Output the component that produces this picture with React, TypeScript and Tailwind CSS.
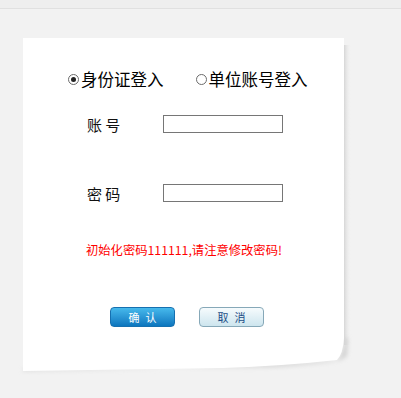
import React from "react";

const cjk = "font-['Microsoft_YaHei','Noto_Sans_CJK_SC',sans-serif]";

function Radio({ checked }: { checked?: boolean }) {
  return (
    <span className="flex h-[11px] w-[11px] shrink-0 items-center justify-center rounded-full border border-[#6b6b6b] bg-white">
      {checked && <span className="h-[5px] w-[5px] rounded-full bg-[#222]" />}
    </span>
  );
}

function PaperSheet() {
  // paper sheet with a curled bottom-right corner, drawn behind the form
  return (
    <svg className="pointer-events-none absolute left-0 top-0 overflow-visible" width="321" height="334" viewBox="0 0 321 334">
      <defs>
        <linearGradient id="side" x1="0" x2="1" y1="0" y2="0">
          <stop offset="0" stopColor="#d6d6d6" />
          <stop offset="1" stopColor="#f2f2f2" stopOpacity="0" />
        </linearGradient>
        <filter id="blur" x="-10%" y="-10%" width="120%" height="120%">
          <feGaussianBlur stdDeviation="2" />
        </filter>
      </defs>
      <rect x="321" y="7" width="7" height="300" fill="url(#side)" />
      <path d="M0,331 L250,329 Q300,326 318,322 L324,318 L325,300 L321,300 L321,304 Q320,318 314,322 Q200,330 0,333 Z" fill="#d2d2d2" filter="url(#blur)" />
      <path d="M0,0 H321 V300 Q320,316 314,322 Q260,328 200,330 L0,333 Z" fill="#ffffff" />
    </svg>
  );
}

export default function App() {
  return (
    <div className={`h-[398px] w-[401px] overflow-hidden bg-[#f2f2f2] ${cjk}`}>
      <div className="h-[9px] border-b border-[#e0e0e0] bg-[#eeeeee]" />
      <div className="relative ml-[23px] mt-[29px] h-[334px] w-[321px]">
        <PaperSheet />
        <div className="relative flex flex-col">
          <div className="ml-[45px] mt-[31px] flex h-[20px] items-center text-[16.5px] text-black">
            <label className="flex items-center gap-[2px]">
              <Radio checked />
              <span>身份证登入</span>
            </label>
            <label className="ml-[32px] flex items-center gap-[2px]">
              <Radio />
              <span>单位账号登入</span>
            </label>
          </div>

          <div className="ml-[64px] mt-[26px] flex h-[18px] items-center">
            <span className="w-[76px] text-[15px] leading-none text-[#111]">账 号</span>
            <input className="h-[18px] w-[120px] border border-[#767676] bg-white outline-none" />
          </div>
          <div className="ml-[64px] mt-[51px] flex h-[18px] items-center">
            <span className="w-[76px] text-[15px] leading-none text-[#111]">密 码</span>
            <input type="password" className="h-[18px] w-[120px] border border-[#767676] bg-white outline-none" />
          </div>

          <p className="ml-[63px] mt-[40px] h-[16px] text-[12.3px] leading-[16px] text-[#ff0000]">
            初始化密码111111,请注意修改密码!
          </p>

          <div className="ml-[87px] mt-[49px] flex gap-[24px]">
            <button className="flex h-[20px] w-[65px] items-center justify-center rounded-[4px] border border-[#1670b0] bg-gradient-to-b from-[#46b9ec] to-[#0b76be] text-[11px] tracking-[6px] text-white">
              <span className="pl-[6px]">确认</span>
            </button>
            <button className="flex h-[20px] w-[65px] items-center justify-center rounded-[4px] border border-[#86a8b8] bg-gradient-to-b from-[#f6fbfd] to-[#cde5ee] text-[11px] tracking-[6px] text-[#1c4d86]">
              <span className="pl-[6px]">取消</span>
            </button>
          </div>
        </div>
      </div>
    </div>
  );
}
